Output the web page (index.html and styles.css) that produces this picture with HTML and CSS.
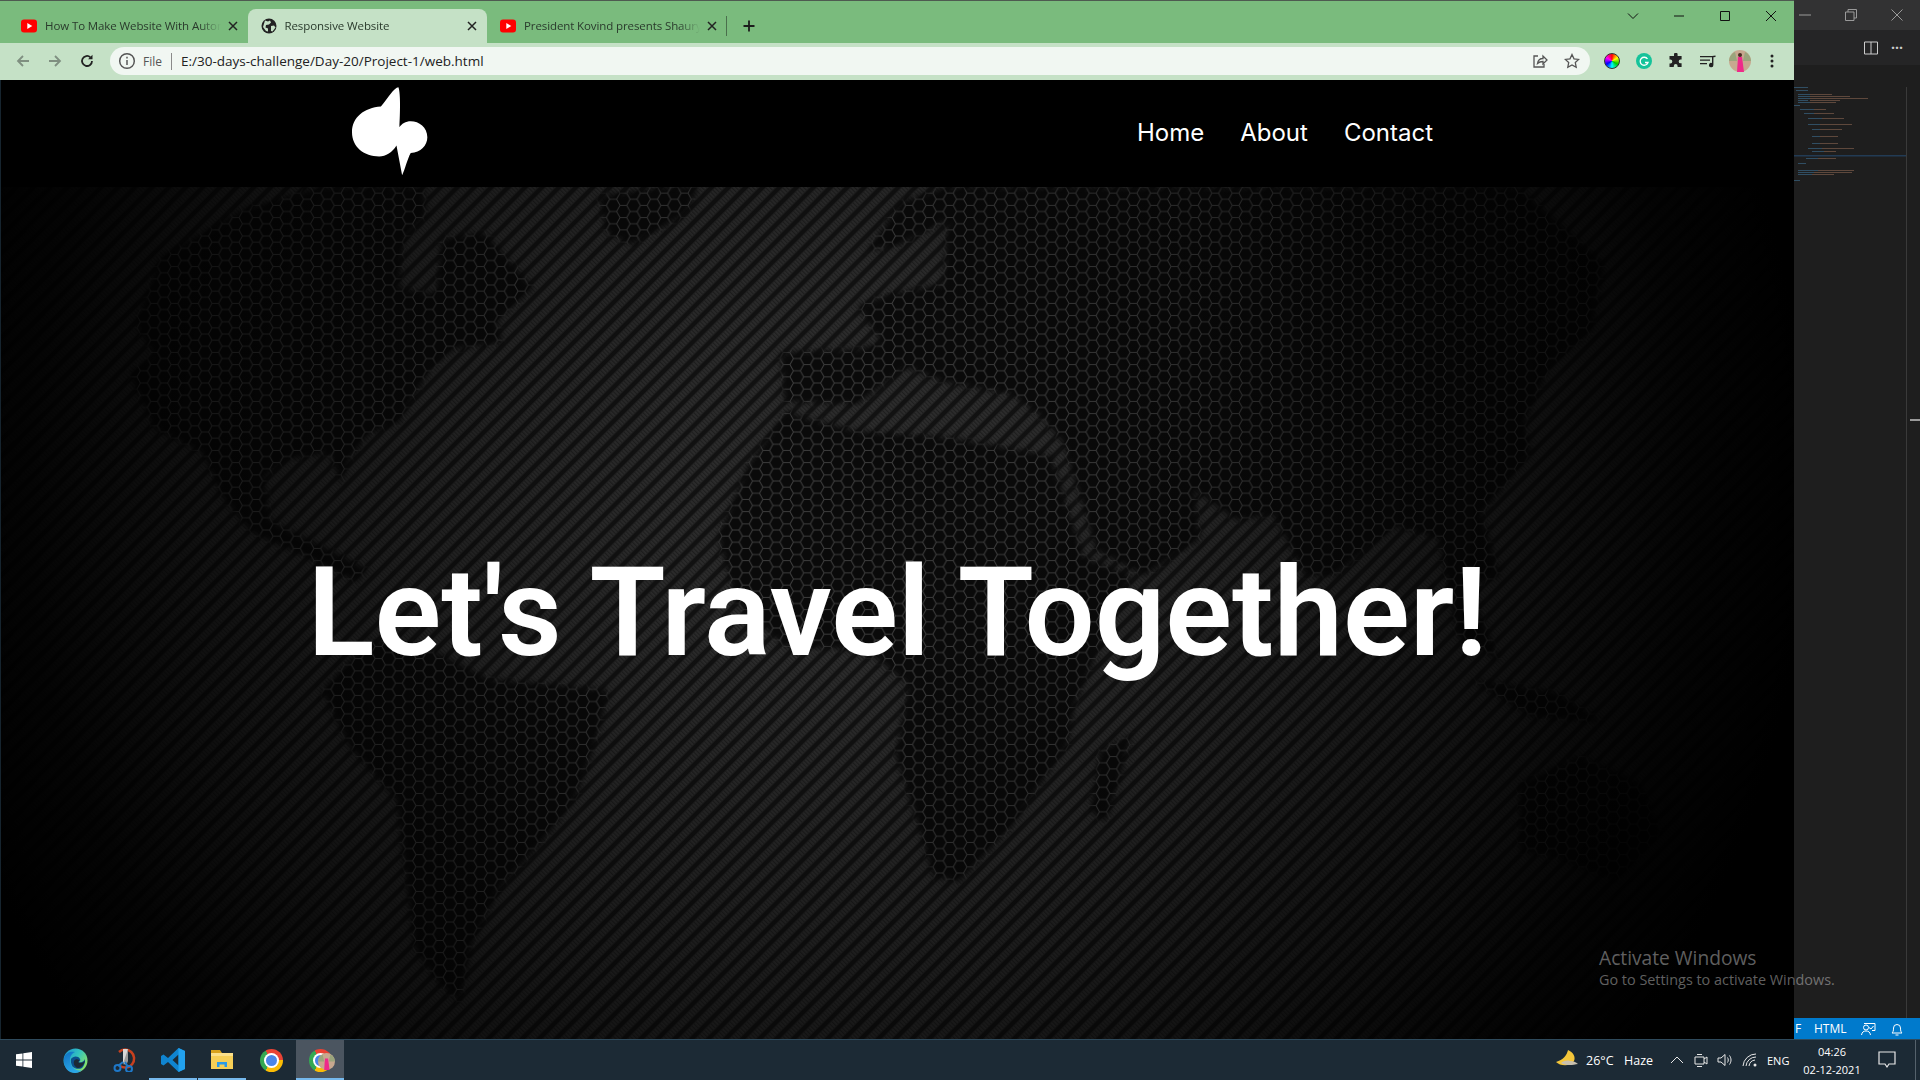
FILE: index.html
```html
<!DOCTYPE html>
<html lang="en">
<head>
<meta charset="utf-8">
<title>Responsive Website</title>
<link rel="stylesheet" href="styles.css">
</head>
<body>
<div class="screen">
  <div class="desktop">
    <div class="browser">
      <div class="tabstrip">
        <div class="tab">
          <svg class="tab-icon" viewBox="0 0 16 16"><rect x="0" y="1.5" width="16" height="13" rx="3" fill="#f00"/><path d="M6.3 5v6l5-3z" fill="#fff"/></svg>
          <span class="tab-title">How To Make Website With Automatic Image Slider</span>
          <svg class="tab-close" viewBox="0 0 16 16"><path d="M4 4l8 8M12 4l-8 8"/></svg>
        </div>
        <div class="tab tab-active">
          <svg class="tab-icon" viewBox="0 0 16 16"><circle cx="8" cy="8" r="7.5" fill="#222"/><path d="M4 2.500l3 1 2-1 1 2-2 2-3 .5-.5 2.500 2.500 1v3l-2-.5-3-4zM10 8l3-.5 1.500 2-3 4-1.500-.5z" fill="#c5e1c6"/></svg>
          <span class="tab-title">Responsive Website</span>
          <svg class="tab-close" viewBox="0 0 16 16"><path d="M4 4l8 8M12 4l-8 8"/></svg>
        </div>
        <div class="tab">
          <svg class="tab-icon" viewBox="0 0 16 16"><rect x="0" y="1.5" width="16" height="13" rx="3" fill="#f00"/><path d="M6.3 5v6l5-3z" fill="#fff"/></svg>
          <span class="tab-title">President Kovind presents Shaurya Chakra</span>
          <svg class="tab-close" viewBox="0 0 16 16"><path d="M4 4l8 8M12 4l-8 8"/></svg>
        </div>
        <span class="tab-sep"></span>
        <svg class="new-tab" viewBox="0 0 16 16"><path d="M8 2.500v11M2.500 8h11"/></svg>
        <div class="win-controls">
          <button class="win-btn"><svg viewBox="0 0 12 12"><path d="M1 3.500l5 5 5-5"/></svg></button>
          <button class="win-btn"><svg viewBox="0 0 12 12"><path d="M1 6h10"/></svg></button>
          <button class="win-btn"><svg viewBox="0 0 12 12"><path d="M1.500 1.500h9v9h-9z"/></svg></button>
          <button class="win-btn"><svg viewBox="0 0 12 12"><path d="M1 1l10 10M11 1L1 11"/></svg></button>
        </div>
      </div>
      <div class="toolbar">
        <span class="tool"><svg class="ico-muted" viewBox="0 0 16 16"><path d="M14 8H3M8 3L3 8l5 5"/></svg></span>
        <span class="tool"><svg class="ico-muted" viewBox="0 0 16 16"><path d="M2 8h11M8 3l5 5-5 5"/></svg></span>
        <span class="tool"><svg class="ico-dark" viewBox="0 0 16 16"><path d="M13 8a5 5 0 1 1-1.600-3.700"/><path class="solid" d="M13.500 1.800v4.400H9.100z"/></svg></span>
        <div class="omnibox">
          <svg class="info" viewBox="0 0 16 16"><circle cx="8" cy="8" r="6.500"/><path d="M8 7v4.500M8 4.300v1.400"/></svg>
          <span class="scheme">File</span>
          <span class="omni-sep"></span>
          <span class="url">E:/30-days-challenge/Day-20/Project-1/web.html</span>
          <span class="tool omni-share"><svg class="ico-gray" viewBox="0 0 16 16"><path d="M6 3H2v11h10v-3"/><path d="M5.500 10.500C6 7 8.500 5.500 11 5.500V3l4 4-4 4V8.500c-2.500 0-4 .5-5.500 2z"/></svg></span>
          <span class="tool"><svg class="ico-gray" viewBox="0 0 16 16"><path d="M8 1.500l2 4.300 4.700.6-3.400 3.200.9 4.700L8 12l-4.200 2.300.9-4.700L1.300 6.400 6 5.800z"/></svg></span>
        </div>
        <span class="tool tool-first"><span class="wheel"></span></span>
        <span class="tool"><svg class="plain" viewBox="0 0 16 16"><circle cx="8" cy="8" r="8" fill="#15c39a"/><path d="M11.500 6A4 4 0 1 0 12 9.500H9" fill="none" stroke="#fff" stroke-width="1.300"/></svg></span>
        <span class="tool"><svg class="plain" viewBox="0 0 16 16"><path d="M6 1.500a1.800 1.800 0 0 1 3.600 0V3h4v3.500h-1a1.900 1.900 0 0 0 0 3.800h1V14h-4v-1a1.900 1.900 0 0 0-3.800 0v1H1.500v-3.500h.8a2 2 0 0 0 0-4H1.500V3H6z" fill="#222"/></svg></span>
        <span class="tool"><svg class="plain" viewBox="0 0 16 16"><path d="M0 3h12v1.300H0zM0 6.500h10v1.300H0zM0 10h7v1.300H0zM12 3l3.500-.5v1.500L13.400 4.300V12a2.200 2.200 0 1 1-1.400-2z" fill="#222"/></svg></span>
        <span class="tool"><svg class="avatar" viewBox="0 0 22 22"><circle cx="11" cy="11" r="11" fill="#c7a88f"/><path d="M0 11a11 11 0 0 1 6-9l2 9zM22 11a11 11 0 0 0-6-9l-2 9z" fill="#9aa57c"/><circle cx="11" cy="5" r="2" fill="#4a2a22"/><path d="M9 7h4l2 15H8z" fill="#ee2a8a"/></svg></span>
        <span class="tool"><svg class="plain" viewBox="0 0 16 16"><circle cx="8" cy="3" r="1.500" fill="#222"/><circle cx="8" cy="8" r="1.500" fill="#222"/><circle cx="8" cy="13" r="1.500" fill="#222"/></svg></span>
      </div>
      <div class="page">
        <header class="site-nav">
          <svg class="logo" viewBox="60 48 232 270"><path d="M203 50C190 50 170 85 150 108 100 112 63 140 63 185 63 230 100 258 145 258 165 258 185 245 197 225L214 315C222 300 230 265 240 248 270 245 290 225 290 200 290 170 265 152 240 152 225 152 212 160 206 170 208 130 210 70 203 50Z" fill="#fff"/></svg>
          <nav class="menu">
            <a class="menu-link">Home</a>
            <a class="menu-link">About</a>
            <a class="menu-link">Contact</a>
          </nav>
        </header>
        <section class="hero">
          <svg class="hero-bg" viewBox="0 0 1794 852" preserveAspectRatio="none">
            <defs>
              <pattern id="carbon" width="12" height="12" patternUnits="userSpaceOnUse" patternTransform="rotate(-45)">
                <rect width="12" height="12" fill="#121212"/>
                <rect y="1.500" width="12" height="7" fill="#2e2e2e"/>
                <rect x="0" y="1.500" width="1.200" height="7" fill="#1f1f1f"/>
                <rect x="3" y="1.500" width="1.200" height="7" fill="#1f1f1f"/>
                <rect x="6" y="1.500" width="1.200" height="7" fill="#1f1f1f"/>
                <rect x="9" y="1.500" width="1.200" height="7" fill="#1f1f1f"/>
              </pattern>
              <pattern id="hex" width="25" height="15" patternUnits="userSpaceOnUse" patternTransform="scale(.8167)">
                <rect width="25" height="15" fill="#0a0a0a"/>
                <path d="M0 0h4.200L8.400 7.500 4.200 15H0M8.400 7.500H16.600M16.600 7.500L20.800 0H25M16.600 7.500L20.800 15H25" fill="none" stroke="#404040" stroke-width="1.200"/>
              </pattern>
              <radialGradient id="vignette" gradientUnits="userSpaceOnUse" cx="0" cy="0" r="1" gradientTransform="translate(860 300) scale(950 960)">
                <stop offset="0" stop-color="#000" stop-opacity="0"/>
                <stop offset=".2" stop-color="#000" stop-opacity=".04"/>
                <stop offset=".45" stop-color="#000" stop-opacity=".3"/>
                <stop offset=".7" stop-color="#000" stop-opacity=".62"/>
                <stop offset=".88" stop-color="#000" stop-opacity=".9"/>
                <stop offset="1" stop-color="#000" stop-opacity="1"/>
              </radialGradient>
              <filter id="soft" x="-5%" y="-5%" width="110%" height="110%"><feGaussianBlur stdDeviation="2.500"/></filter>
              <path id="land" d="M130 210L200 170 260 153 345 153 348 175 330 195 325 235 355 240 360 195 395 190 435 235 405 262 410 280 370 285 352 300 325 345 300 355 285 375 278 395 268 370 235 375 215 390 220 425 250 440 300 465 290 475 250 455 205 435 180 405 165 370 125 350 105 305 125 290 110 265Z
              M488 160L540 153 570 153 560 175 515 200 495 190Z
              M300 523L345 528 400 555 440 558 497 564 485 610 469 653 440 690 408 725 385 770 375 819 355 800 338 774 330 710 323 653 285 610 262 564Z
              M586 438L610 380 642 335 653 340 700 352 773 357 858 372 885 455 924 470 895 535 877 577 872 608 825 676 783 720 762 716 745 660 731 617 741 559 715 537 690 530 640 528 600 490Z
              M924 600L913 640 903 671 890 662 898 613Z
              M770 153L1240 153 1310 215 1300 270 1265 300 1245 345 1250 370 1210 420 1225 470 1200 480 1225 540 1190 520 1175 440 1140 430 1090 470 1065 470 1040 420 1010 425 975 400 980 440 935 470 895 450 868 362 850 340 825 322 770 312 740 300 700 330 640 328 637 288 700 285 720 280 700 250 725 240 770 232 773 180 735 200 708 205 735 165Z
              M1241 640L1290 617 1340 640 1356 680 1320 720 1270 700 1241 695Z
              M1200 555L1270 565 1310 590 1250 585Z"/>
              <mask id="land-mask" maskUnits="userSpaceOnUse" x="0" y="0" width="1794" height="852">
                <g transform="translate(0 -187) scale(1.2245)"><use href="#land" fill="#fff" filter="url(#soft)"/></g>
              </mask>
            </defs>
            <rect width="1794" height="852" fill="url(#carbon)"/>
            <rect width="1794" height="852" fill="url(#hex)" mask="url(#land-mask)"/>
            <rect width="1794" height="852" fill="url(#vignette)"/>
          </svg>
          <h1 class="hero-title">Let's Travel Together!</h1>
        </section>
      </div>
    </div>
    <aside class="editor">
      <div class="ed-title">
        <svg class="ed-win" viewBox="0 0 12 12"><path d="M0 6h12"/></svg>
        <svg class="ed-win" viewBox="0 0 12 12"><path d="M.5 3h8.500v8.500H.5zM3 3V.5h8.500V9H9"/></svg>
        <svg class="ed-win" viewBox="0 0 12 12"><path d="M.5.5l11 11M11.500.5l-11 11"/></svg>
      </div>
      <div class="ed-tabs">
        <svg class="ed-split" viewBox="0 0 14 14"><path d="M.5 1h13v12H.5zM7 1v12"/></svg>
        <span class="ed-more">···</span>
      </div>
      <div class="ed-body">
        <svg class="minimap" viewBox="0 0 112 110" width="112" height="110">
          <g fill="#3c6f91">
            <rect x="0" y="0" width="14" height="1"/><rect x="2" y="3" width="12" height="1"/><rect x="4" y="7" width="14" height="1"/><rect x="4" y="9" width="12" height="1"/><rect x="4" y="11" width="12" height="1"/><rect x="4" y="13" width="10" height="1"/><rect x="4" y="15" width="12" height="1"/><rect x="0" y="18" width="6" height="1"/><rect x="6" y="22" width="14" height="1"/><rect x="10" y="26" width="10" height="1"/><rect x="14" y="31" width="14" height="1"/><rect x="14" y="37" width="12" height="1"/><rect x="18" y="42" width="8" height="1"/><rect x="18" y="49" width="8" height="1"/><rect x="18" y="56" width="8" height="1"/><rect x="14" y="61" width="14" height="1"/><rect x="18" y="64" width="12" height="1"/><rect x="12" y="71" width="12" height="1"/><rect x="4" y="76" width="8" height="1"/><rect x="4" y="83" width="20" height="1"/><rect x="4" y="85" width="16" height="1"/><rect x="4" y="87" width="14" height="1"/><rect x="0" y="93" width="6" height="1"/>
          </g>
          <g fill="#8a6450">
            <rect x="16" y="7" width="22" height="1"/><rect x="16" y="9" width="40" height="1"/><rect x="16" y="11" width="58" height="1"/><rect x="16" y="13" width="30" height="1"/><rect x="16" y="15" width="26" height="1"/><rect x="20" y="22" width="12" height="1"/><rect x="20" y="26" width="20" height="1"/><rect x="28" y="31" width="22" height="1"/><rect x="26" y="37" width="32" height="1"/><rect x="26" y="42" width="22" height="1"/><rect x="26" y="49" width="18" height="1"/><rect x="26" y="56" width="18" height="1"/><rect x="28" y="61" width="32" height="1"/><rect x="30" y="64" width="12" height="1"/><rect x="24" y="71" width="18" height="1"/><rect x="24" y="83" width="36" height="1"/><rect x="20" y="85" width="38" height="1"/><rect x="18" y="87" width="22" height="1"/>
          </g>
          <rect x="0" y="68" width="112" height="1.500" fill="#264f78"/>
        </svg>
        <span class="ed-rule"></span>
        <span class="ed-thumb"></span>
      </div>
      <div class="ed-status">
        <span class="st-cut">F</span>
        <span class="st-lang">HTML</span>
        <svg class="st-ico" viewBox="0 0 16 16"><circle cx="6" cy="6.500" r="2.500"/><path d="M1.500 14c.5-3 2-4 4.500-4s4 1 4.500 4M4 2.500h11v7h-3M9 6.500l2 1.500 2.500-3"/></svg>
        <svg class="st-ico st-bell" viewBox="0 0 16 16"><path d="M3 12c1-1 1.500-2 1.500-5a3.500 3.500 0 0 1 7 0c0 3 .5 4 1.500 5zM6.500 14h3"/></svg>
      </div>
    </aside>
  </div>
  <footer class="taskbar">
    <div class="task-item task-start"><svg class="plain-16" viewBox="0 0 16 16"><path d="M0 2.300L6.500 1.400V7.600H0zM7.300 1.300L16 0V7.600H7.300zM0 8.400H6.500V14.600L0 13.700zM7.300 8.400H16V16L7.300 14.700z" fill="#fff"/></svg></div>
    <div class="task-item"><svg class="plain-25" viewBox="0 0 25 25">
      <defs>
        <linearGradient id="edge-a" x1="0" y1="0" x2="1" y2=".6"><stop offset="0" stop-color="#1a8fd0"/><stop offset=".55" stop-color="#32c2c0"/><stop offset="1" stop-color="#86e26a"/></linearGradient>
        <linearGradient id="edge-b" x1="0" y1="0" x2=".4" y2="1"><stop offset="0" stop-color="#0f6fc0"/><stop offset="1" stop-color="#2aa8e8"/></linearGradient>
      </defs>
      <circle cx="12.500" cy="12.500" r="12" fill="url(#edge-a)"/>
      <path d="M1 10C3 4 8 3 12 4c-4 2-6 6-4.500 11C9 20 14 24 19 22c-2 2-4 3-7 3C5 25 0 19 1 10z" fill="url(#edge-b)"/>
      <path d="M8 11c2-3 7-3.500 9 0 1 2-1 3-2 3 2 1 6 0 7-3 .5 3-1 7-3 9-3 1.500-7 1-9.500-1.500C8 16 7.500 13 8 11z" fill="#0b4f8c"/>
      <path d="M11 13c1-2 3.500-2.500 5-1 .5.800-.5 2-1 2 2 1.500 5 1 7-1-1 4-4 7-7 7-3-.5-5-4-4-7z" fill="#1c2a35"/>
    </svg></div>
    <div class="task-item"><svg class="plain-24" viewBox="0 0 24 24"><path d="M7 4a9 9 0 1 1 1 14" fill="none" stroke="#c8401e" stroke-width="2.500"/><path d="M11 1l5 0-2 12-2 4-1-4z" fill="#d8d8d8"/><path d="M16 1l-4 12 2 5 2-5z" fill="#9a9a9a"/><circle cx="5.500" cy="20" r="3" fill="none" stroke="#1e78c8" stroke-width="2"/><circle cx="17" cy="21" r="3" fill="none" stroke="#1e78c8" stroke-width="2"/><path d="M11 14l-5 4M13 14l3 5" stroke="#1e78c8" stroke-width="2"/></svg></div>
    <div class="task-item task-open"><svg class="plain-24" viewBox="0 0 24 24"><path d="M17.500 0L24 3v18l-6.500 3L7 14l-4.500 3.500L0 16V8l2.500-1.500L7 10zM17.500 6.500L11.500 12l6 5.500z" fill="#0f84d0"/><path d="M17.500 0L24 3v18l-6.500 3z" fill="#22a1ee"/></svg></div>
    <div class="task-item task-open"><svg class="plain-24" viewBox="0 0 24 24"><path d="M1 2h9l2 3H1z" fill="#d9a21c"/><path d="M1 5h22v16H1z" fill="#f7cf56"/><path d="M1 5h22v3H1z" fill="#fce08a"/><path d="M7 19v-5h10v5h-2.500v-2.500h-5V19z" fill="#2b9be8"/></svg></div>
    <div class="task-item"><span class="chrome"></span></div>
    <div class="task-item task-open task-current">
      <span class="chrome"></span>
      <svg class="task-badge" viewBox="0 0 22 22"><circle cx="11" cy="11" r="11" fill="#c7a88f"/><path d="M0 11a11 11 0 0 1 6-9l2 9zM22 11a11 11 0 0 0-6-9l-2 9z" fill="#9aa57c"/><path d="M9 7h4l2 15H8z" fill="#ee2a8a"/></svg>
    </div>
    <div class="tray">
      <svg class="moon" viewBox="0 0 24 20"><path d="M13 0c-1 5-5 10-12 12 4 4 14 5 18-1 2-4-1-9-6-11z" fill="#f4c63a"/><path d="M6 13c2-2 6-3 9-2 3 0 6 1 8 3-5 1-12 2-17-1z" fill="#c9c0ae"/></svg>
      <span class="tray-text temp">26°C</span>
      <span class="tray-text haze">Haze</span>
      <svg class="tray-ico t-chev" viewBox="0 0 16 16"><path d="M2 11l6-6 6 6"/></svg>
      <svg class="tray-ico t-cam" viewBox="0 0 16 16"><path d="M2 5h9v7H2zM11 7l3-2v7l-3-2M4 2.500h5M4 14.500h5"/></svg>
      <svg class="tray-ico t-vol" viewBox="0 0 16 16"><path d="M1 6h3l4-3.500v11L4 10H1zM10.500 5.500c1 1.500 1 3.500 0 5M12.500 3.500c2 3 2 6 0 9"/></svg>
      <svg class="tray-ico t-wifi" viewBox="0 0 16 16"><path d="M1 14a13 13 0 0 1 13-12M4 14a10 10 0 0 1 10-9M7 14a7 7 0 0 1 6-6"/><circle class="solid" cx="13" cy="13" r="1.500"/></svg>
      <span class="tray-text eng">ENG</span>
      <div class="clock"><span>04:26</span><span>02-12-2021</span></div>
      <svg class="tray-ico t-note" viewBox="0 0 20 18"><path d="M2 1h16v12h-6l-2 3-2-3H2z"/></svg>
      <span class="tray-div"></span>
    </div>
  </footer>
  <div class="activate">
    <div class="activate-1">Activate Windows</div>
    <div class="activate-2">Go to Settings to activate Windows.</div>
  </div>
</div>
</body>
</html>
```

FILE: styles.css
```css
* { box-sizing: border-box; }
html, body { margin: 0; height: 100%; }
body { background: #000; font-family: "Open Sans", "Liberation Sans", sans-serif; overflow: hidden; }
svg { display: block; flex: none; }

.screen { position: relative; width: 1920px; height: 1080px; display: flex; flex-direction: column; }
.desktop { display: flex; height: 1039px; }
.browser { width: 1794px; display: flex; flex-direction: column; }

/* tabs */
.tabstrip { height: 43px; background: #7abb7d; border-top: 1px solid #4e5a50; display: flex; align-items: flex-end; padding-left: 8px; position: relative; }
.tab { width: 239.500px; height: 34px; padding: 0 7px 1px 13px; display: flex; align-items: center; border-radius: 8px 8px 0 0; color: #2a3a2c; }
.tab-active { background: #c5e1c6; }
.tab-icon { width: 16px; height: 16px; margin-right: 8px; }
.tab-title { flex: 1; font-size: 11.500px; white-space: nowrap; overflow: hidden; -webkit-mask-image: linear-gradient(to right, #000 88%, transparent 100%); mask-image: linear-gradient(to right, #000 88%, transparent 100%); letter-spacing: -.1px; }
.tab-close { width: 16px; height: 16px; fill: none; stroke: #222; stroke-width: 1.500; margin-left: 4px; }
.tab-sep { width: 1px; height: 20px; background: #4a6f4c; margin: 0 0 7px -1px; }
.new-tab { width: 16px; height: 16px; margin: 0 0 9px 14px; fill: none; stroke: #1c1c1c; stroke-width: 1.800; }
.win-controls { position: absolute; right: 0; top: 0; height: 30px; display: flex; }
.win-btn { width: 46px; height: 30px; padding: 0; border: 0; background: none; display: flex; align-items: center; justify-content: center; }
.win-btn svg { width: 12px; height: 12px; fill: none; stroke: #111; stroke-width: 1; }

/* toolbar */
.toolbar { height: 37px; background: #c5e1c6; display: flex; align-items: center; padding: 0 6px 1px 7px; }
.tool { width: 32px; height: 32px; flex: none; display: flex; align-items: center; justify-content: center; }
.tool svg { width: 16px; height: 16px; }
.ico-muted { fill: none; stroke: #7f8f80; stroke-width: 1.800; }
.ico-dark { fill: none; stroke: #222; stroke-width: 1.800; }
.ico-dark .solid { fill: #222; stroke: none; }
.ico-gray { fill: none; stroke: #555; stroke-width: 1.300; }
.omnibox { flex: 1; height: 28px; margin-left: 7px; background: #f1f7f2; border-radius: 14px; display: flex; align-items: center; padding: 0 2px 0 8px; }
.info { width: 18px !important; height: 18px !important; fill: none; stroke: #555; stroke-width: 1.300; }
.scheme { margin-left: 7px; font-size: 12px; color: #555; }
.omni-sep { width: 1px; height: 17px; background: #8a8a8a; margin: 0 9px 0 9px; }
.url { flex: 1; font-size: 13.500px; color: #222; white-space: nowrap; }
.tool-first { margin-left: 6px; }
.wheel { width: 16px; height: 16px; border-radius: 50%; background: conic-gradient(#f00, #ff0, #0c0, #0ff, #00f, #f0f, #f00); border: 1px solid #333; }
.avatar { width: 22px !important; height: 22px !important; }

/* page */
.page { flex: 1; background: #000; display: flex; flex-direction: column; border-left: 1px solid #16242e; }
.site-nav { height: 107px; flex: none; display: flex; align-items: center; justify-content: space-between; padding: 0 361px 0 350px; }
.logo { width: 77px; height: 91px; margin-bottom: 5px; }
.menu { display: flex; gap: 36px; margin-bottom: 2px; }
.menu-link { font-family: Inter, "Liberation Sans", sans-serif; font-size: 24px; color: #fff; }

.hero { flex: 1; position: relative; display: grid; place-items: center; overflow: hidden; }
.hero-bg { position: absolute; inset: 0; width: 100%; height: 100%; }
.hero-title { position: relative; margin: 0; font-family: Roboto, "Liberation Sans", sans-serif; font-size: 124px; font-weight: 600; line-height: 1.2; color: #fff; white-space: nowrap; }

/* editor */
.editor { flex: 1; display: flex; flex-direction: column; background: #1e1e1e; }
.ed-title { height: 30px; background: #323233; display: flex; align-items: center; padding-left: 5px; gap: 34px; }
.ed-win { width: 12px; height: 12px; fill: none; stroke: #9a9a9a; stroke-width: 1; }
.ed-tabs { height: 35px; background: #252526; display: flex; align-items: center; padding-left: 70px; }
.ed-split { width: 14px; height: 14px; fill: none; stroke: #ccc; stroke-width: 1; }
.ed-more { margin-left: 13px; color: #ccc; font-size: 14px; font-weight: 700; }
.ed-body { flex: 1; position: relative; }
.minimap { position: absolute; left: 0; top: 22px; opacity: .6; }
.ed-rule { position: absolute; left: 112px; top: 22px; bottom: 0; width: 1px; background: #3a3a3a; }
.ed-thumb { position: absolute; right: 0; top: 354px; width: 10px; height: 2px; background: #9a9a9a; }
.ed-status { height: 21px; background: #007acc; display: flex; align-items: center; color: #fff; font-size: 12px; padding-left: 1px; }
.st-cut { width: 19px; }
.st-lang { width: 46px; font-size: 12px; }
.st-ico { width: 16px; height: 16px; fill: none; stroke: #fff; stroke-width: 1; }
.st-bell { margin-left: 13px; }

/* taskbar */
.taskbar { height: 41px; background: #1c2a35; border-top: 1px solid #2e4a5c; display: flex; gap: 1px; color: #fff; }
.task-item { position: relative; width: 48px; height: 100%; display: flex; align-items: center; justify-content: center; }
.task-start { margin-right: 2px; }
.task-open { border-bottom: 2px solid #76b9ed; padding-top: 2px; }
.task-current { background: #4b5560; }
.plain-16 { width: 16px; height: 16px; }
.plain-24 { width: 24px; height: 24px; }
.plain-25 { width: 25px; height: 25px; }
.chrome { position: relative; width: 23px; height: 23px; border-radius: 50%; background: conic-gradient(#ea4335 0 90deg, #fbbc05 90deg 210deg, #34a853 210deg 330deg, #ea4335 330deg); }
.chrome::after { content: ""; position: absolute; inset: 6px; border-radius: 50%; background: #4a86e8; box-shadow: 0 0 0 2px #fff; }
.task-badge { position: absolute; left: 22px; top: 13px; width: 17px; height: 17px; }

.tray { margin-left: auto; display: flex; align-items: center; padding-right: 4px; }
.moon { width: 24px; height: 20px; }
.tray-text { font-size: 12.500px; white-space: nowrap; }
.temp { margin-left: 7px; width: 30px; }
.haze { margin-left: 8px; width: 31px; }
.tray-ico { width: 16px; height: 16px; fill: none; stroke: #e8e8e8; stroke-width: 1; }
.tray-ico .solid { fill: #e8e8e8; stroke: none; }
.t-chev { margin-left: 14px; }
.t-cam { margin-left: 8px; }
.t-vol { margin-left: 8px; }
.t-wifi { margin-left: 9px; }
.eng { margin-left: 9px; width: 24px; font-size: 11px; }
.clock { margin-left: 9px; width: 64px; display: flex; flex-direction: column; align-items: center; gap: 3px; font-size: 11px; line-height: 15px; }
.t-note { width: 20px; height: 18px; margin-left: 13px; stroke-width: 1.200; }
.tray-div { width: 1px; height: 41px; background: #55626c; margin-left: 18px; }

/* watermark */
.activate { position: absolute; left: 1599px; top: 946px; color: rgba(255, 255, 255, .38); white-space: nowrap; pointer-events: none; }
.activate-1 { font-size: 19.200px; line-height: 24px; }
.activate-2 { font-size: 14.400px; line-height: 20px; }
```
